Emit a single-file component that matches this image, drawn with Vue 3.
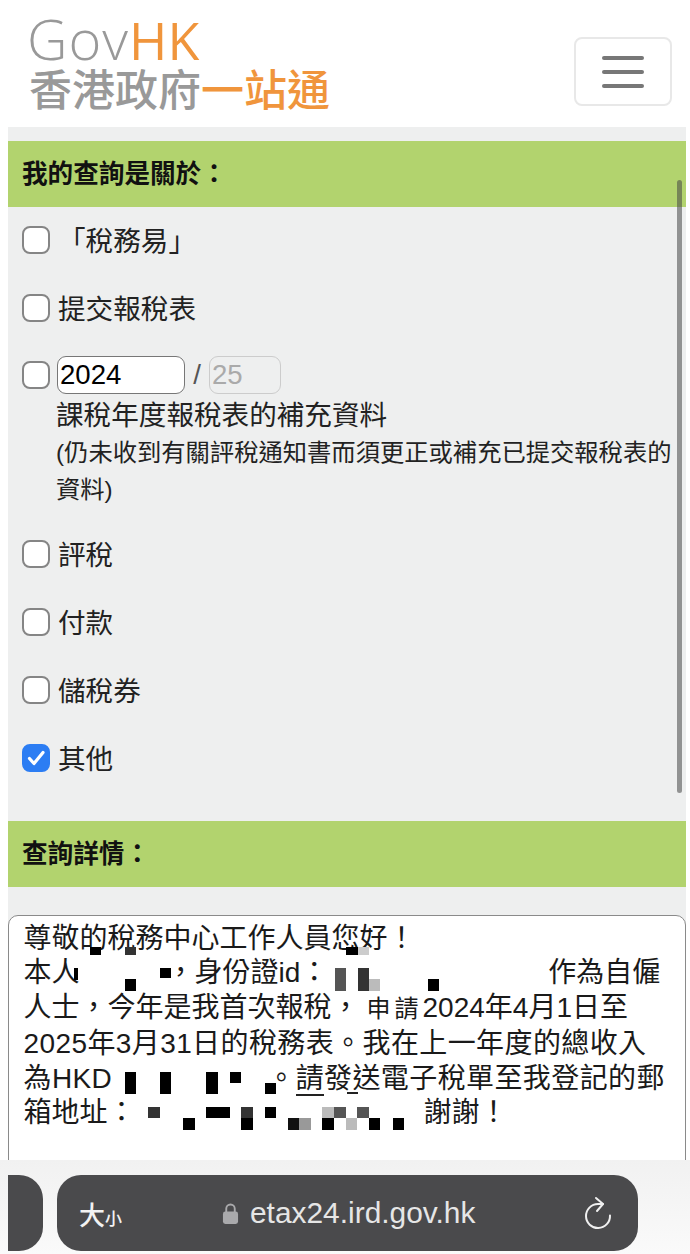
<script setup>
import { ref } from 'vue'

const topics = ref([
  { label: '評稅', checked: false },
  { label: '付款', checked: false },
  { label: '儲稅券', checked: false },
  { label: '其他', checked: true },
])

const first = ref(false)
const second = ref(false)
const third = ref(false)
const startYear = ref('2024')

// mosaic over the personal details: x, y, w, h in page px, colour
const mosaic = [
  [90, 947, 11, 8, '#000'], [125, 947, 11, 8, '#333'], [346, 947, 12, 8, '#000'], [358, 947, 11, 8, '#ccc'],
  [74, 968, 4, 12, '#000'], [125, 979, 11, 12, '#000'], [160, 968, 11, 10, '#000'],
  [335, 968, 11, 23, '#555'], [358, 968, 11, 23, '#333'], [369, 979, 11, 12, '#bbb'], [428, 979, 11, 12, '#000'],
  [125, 1072, 11, 22, '#000'], [160, 1072, 11, 22, '#000'], [206, 1072, 12, 22, '#000'],
  [230, 1072, 11, 11, '#000'], [265, 1083, 11, 11, '#000'], [347, 1092, 11, 2, '#222'],
  [148, 1107, 12, 11, '#333'], [183, 1118, 12, 12, '#000'], [206, 1107, 24, 11, '#000'],
  [241, 1107, 12, 11, '#333'], [241, 1118, 12, 12, '#000'], [265, 1107, 11, 11, '#000'],
  [288, 1118, 11, 12, '#111'], [299, 1118, 12, 12, '#999'], [322, 1107, 12, 11, '#bbb'],
  [334, 1107, 12, 11, '#555'], [322, 1118, 12, 12, '#000'], [346, 1118, 11, 12, '#bbb'],
  [357, 1107, 12, 11, '#555'], [369, 1118, 11, 12, '#000'], [393, 1118, 11, 12, '#000'],
]

function blockStyle(b) {
  return {
    left: b[0] - 9 + 'px',
    top: b[1] - 916 + 'px',
    width: b[2] + 'px',
    height: b[3] + 'px',
    background: b[4],
  }
}
</script>

<template>
  <div class="page">
    <header class="header">
      <div class="logo">
        <div class="logo-en">Gov<span class="orange">HK</span></div>
        <div class="logo-zh">香港政府<span class="orange">一站通</span></div>
      </div>
      <button class="menu-btn" aria-label="menu">
        <i></i><i></i><i></i>
      </button>
    </header>

    <main class="main">
      <span class="scrollbar"></span>
      <h2 class="bar"><span>我的查詢是關於：</span></h2>

      <div class="options">
        <label class="row">
          <input type="checkbox" v-model="first" />
          <span class="label-text">「稅務易」</span>
        </label>
        <label class="row">
          <input type="checkbox" v-model="second" />
          <span class="label-text">提交報稅表</span>
        </label>

        <div class="year-block">
          <div class="year-line">
            <input type="checkbox" v-model="third" />
            <input class="year" type="text" v-model="startYear" />
            <span class="slash">/</span>
            <input class="year-end" type="text" value="25" disabled />
          </div>
          <div class="year-text">
            <div class="year-title">課稅年度報稅表的補充資料</div>
            <small>(仍未收到有關評稅通知書而須更正或補充已提交報稅表的資料)</small>
          </div>
        </div>

        <label class="row" v-for="item in topics" :key="item.label">
          <span class="check-wrap">
            <input type="checkbox" v-model="item.checked" />
            <svg v-if="item.checked" class="tick" viewBox="0 0 28 28">
              <path d="M7.5 14.5l4.5 5 9-11" fill="none" stroke="#fff" stroke-width="3.2" stroke-linecap="round" stroke-linejoin="round" />
            </svg>
          </span>
          <span class="label-text">{{ item.label }}</span>
        </label>
      </div>

      <h2 class="bar"><span>查詢詳情：</span></h2>

      <div class="detail">
        <div>尊敬的稅務中心工作人員您好！</div>
        <div>本人<span class="gap-name"></span>，身份證id：<span class="gap-id"></span>作為自僱</div>
        <div>人士，今年是我首次報稅，<span class="small-word">申請</span>2024年4月1日至</div>
        <div class="wide-line">2025年3月31日的稅務表。我在上一年度的總收入</div>
        <div class="wide-line">為HKD<span class="gap-sum"></span>。<span class="mark">請</span>發送電子稅單至我登記的郵</div>
        <div>箱地址：<span class="gap-mail"></span>謝謝！</div>
        <span v-for="(b, i) in mosaic" :key="i" class="block" :style="blockStyle(b)"></span>
      </div>
    </main>

    <footer class="browser-bar">
      <div class="tab-edge"></div>
      <div class="address">
        <span class="text-size">大<small>小</small></span>
        <span class="url">
          <svg class="lock" viewBox="0 0 18 24">
            <path d="M4.5 11V7a4.5 4.5 0 0 1 9 0v4" fill="none" stroke="#aaaaac" stroke-width="2" />
            <rect x="1" y="10" width="16" height="13" rx="2.5" fill="#aaaaac" />
          </svg>
          etax24.ird.gov.hk
        </span>
        <svg class="reload" viewBox="0 -3 28 33">
          <path d="M19 4H14A12 12 0 1 0 26 15.5" fill="none" stroke="#f0f0f0" stroke-width="2" stroke-linecap="round" />
          <path d="M12 -2l7 6-6 7" fill="none" stroke="#f0f0f0" stroke-width="2" stroke-linecap="round" stroke-linejoin="round" />
        </svg>
      </div>
    </footer>
  </div>
</template>

<style>
html,
body {
  margin: 0;
  background: #fff;
}
</style>

<style scoped>
.page {
  width: 690px;
  height: 1254px;
  overflow: hidden;
  display: flex;
  flex-direction: column;
  font-family: 'Liberation Sans', 'Noto Sans CJK TC', sans-serif;
  color: #222;
}

/* 顶部 logo */
.header {
  height: 127px;
  flex: none;
  display: flex;
  justify-content: space-between;
  align-items: flex-start;
  padding-left: 29px;
  padding-right: 18px;
  box-sizing: border-box;
}
.logo {
  color: #999;
  padding-top: 9px;
}
.logo-en {
  font-family: 'Open Sans', sans-serif;
  font-weight: 300;
  font-size: 56px;
  line-height: 58px;
  letter-spacing: 1px;
  margin-left: -2px;
}
.logo-en .orange {
  font-size: 52px;
  font-weight: 400;
  letter-spacing: 0;
}
.logo-zh {
  font-size: 43px;
  line-height: 44px;
  font-weight: 500;
  white-space: nowrap;
}
.orange {
  color: #f0953c;
}
.menu-btn {
  width: 98px;
  height: 69px;
  margin-top: 37px;
  background: #fff;
  border: 2px solid #e8e8e8;
  border-radius: 8px;
  display: flex;
  flex-direction: column;
  align-items: center;
  justify-content: center;
  gap: 10px;
  padding: 0;
}
.menu-btn i {
  display: block;
  width: 42px;
  height: 4px;
  background: #777;
  border-radius: 2px;
}

.main {
  position: relative;
  flex: 1;
  min-height: 0;
  overflow: hidden;
  margin-left: 8px;
  margin-right: 4px;
  padding-top: 14px;
  background: #eeefef;
}
.scrollbar {
  position: absolute;
  left: 669px;
  top: 53px;
  width: 5px;
  height: 613px;
  border-radius: 3px;
  background: rgba(70, 70, 70, 0.55);
}
.bar {
  height: 66px;
  margin: 0;
  padding-left: 14px;
  padding-bottom: 6px;
  box-sizing: border-box;
  display: flex;
  align-items: center;
  background: #b2d36e;
  color: #111;
  font-size: 25.6px;
  font-weight: 700;
}

.options {
  padding: 13px 14px 43px;
  display: flex;
  flex-direction: column;
  gap: 28px;
  font-size: 27.6px;
}
.row {
  height: 40px;
  display: flex;
  align-items: center;
  gap: 8px;
}
.label-text {
  margin-bottom: 3px;
}
input[type='checkbox'] {
  appearance: none;
  width: 28px;
  height: 28px;
  margin: 0;
  flex: none;
  background: #fff;
  border: 2.5px solid #858585;
  border-radius: 8px;
  box-sizing: border-box;
}
input[type='checkbox']:checked {
  background: #2c7df3;
  border-color: #2c7df3;
}
.check-wrap {
  position: relative;
  width: 28px;
  height: 28px;
  flex: none;
}
.tick {
  position: absolute;
  inset: 0;
  width: 28px;
  height: 28px;
}

.year-block {
  display: flex;
  flex-direction: column;
  margin-bottom: -2px;
}
.year-line {
  display: flex;
  align-items: center;
  gap: 7px;
  height: 38px;
}
.year,
.year-end {
  height: 38px;
  box-sizing: border-box;
  border-radius: 9px;
  padding: 0 2px;
  font-family: 'Liberation Sans', sans-serif;
  font-size: 27.6px;
  outline: none;
}
.year {
  width: 128px;
  background: #fff;
  color: #000;
  border: 1.5px solid #777;
}
.slash {
  color: #555;
  width: 10px;
  text-align: center;
}
.year-end {
  width: 72px;
  background: #eeefef;
  color: #aaa;
  border: 1.5px solid #ccc;
}
.year-text {
  padding-left: 34px;
  line-height: 40px;
}
.year-title {
  padding-top: 2px;
  margin-bottom: -2px;
}
.year-text small {
  display: block;
  font-size: 24.3px;
  line-height: 37px;
}

.detail {
  position: relative;
  height: 300px;
  margin-top: 28px;
  background: #fff;
  border: 1.5px solid #8a8a8a;
  border-radius: 10px;
  padding: 5.5px 0 0 14.5px;
  font-size: 28px;
  line-height: 34.8px;
  color: #1a1a1a;
  white-space: nowrap;
}
.wide-line {
  letter-spacing: 0.4px;
}
.gap-name {
  display: inline-block;
  width: 87px;
}
.gap-id {
  display: inline-block;
  width: 220px;
}
.gap-sum {
  display: inline-block;
  width: 155px;
}
.gap-mail {
  display: inline-block;
  width: 288px;
}
.small-word {
  font-size: 24px;
  letter-spacing: 4px;
  margin-left: 7px;
}
.mark {
  border-bottom: 2px solid #222;
}
.block {
  position: absolute;
}

/* 浏览器底栏 */
.browser-bar {
  height: 94px;
  flex: none;
  display: flex;
  gap: 14px;
  padding-left: 8px;
  padding-top: 15px;
  box-sizing: border-box;
  background: linear-gradient(#f1f1f1, #fafafa);
}
.tab-edge {
  width: 35px;
  height: 76px;
  background: #4a4a4c;
  border-radius: 0 24px 24px 0;
}
.address {
  width: 581px;
  height: 76px;
  background: #4a4a4c;
  border-radius: 24px;
  display: flex;
  align-items: center;
  padding: 0 26px 0 22px;
  box-sizing: border-box;
  color: #e6e6e6;
}
.text-size {
  font-size: 26px;
  font-weight: 500;
  color: #f2f2f2;
  width: 143px;
  flex: none;
}
.text-size small {
  font-size: 17px;
}
.url {
  display: flex;
  align-items: center;
  gap: 11px;
  font-size: 29.9px;
  flex: 1;
}
.lock {
  width: 17px;
  height: 23px;
}
.reload {
  width: 28px;
  height: 33px;
  flex: none;
  overflow: visible;
}
</style>
